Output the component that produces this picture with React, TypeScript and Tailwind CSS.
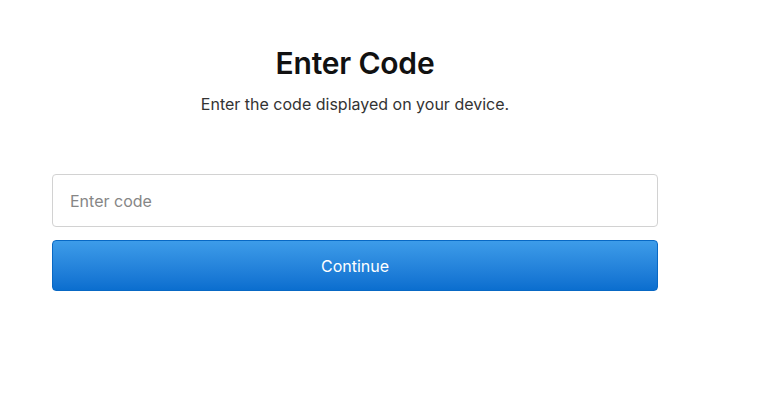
export default function App() {
  return (
    <div className="w-[780px] h-[420px] bg-white" style={{ fontFamily: "Inter, 'Liberation Sans', sans-serif" }}>
      <div className="ml-[52px] w-[606px] pt-[43px] flex flex-col">
        <h1 className="text-center text-[30px] leading-[40px] font-semibold text-[#111] tracking-[-0.2px]">Enter Code</h1>
        <p className="text-center text-[16px] leading-[20px] text-[#333] mt-[11px]">Enter the code displayed on your device.</p>
        <input
          placeholder="Enter code"
          className="mt-[60px] h-[53px] w-full rounded-[4px] border border-[#d2d2d2] px-[17px] text-[16px] text-[#333] placeholder:text-[#868686] outline-none"
        />
        <button className="mt-[13px] h-[51px] w-full rounded-[4px] border border-[#0868c4] bg-gradient-to-b from-[#3d9ce9] to-[#0a6ecf] text-white text-[16px]">
          Continue
        </button>
      </div>
    </div>
  );
}
